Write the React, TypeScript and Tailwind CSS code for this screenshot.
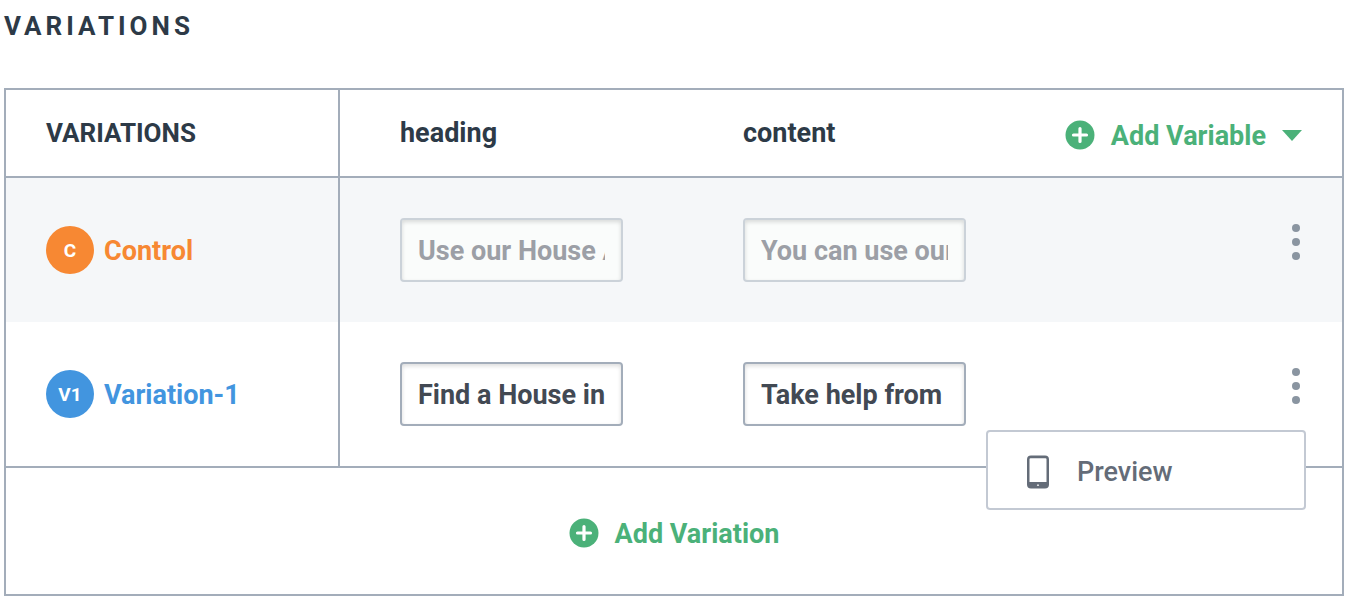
import { useState } from 'react';
import clsx from 'clsx';

const variations = [
  {
    id: 'control',
    badge: 'C',
    name: 'Control',
    heading: 'Use our House A',
    content: 'You can use our',
    disabled: true,
  },
  {
    id: 'v1',
    badge: 'V1',
    name: 'Variation-1',
    heading: 'Find a House in',
    content: 'Take help from',
    disabled: false,
  },
];

function PlusCircle() {
  return (
    <svg viewBox="0 0 30 30" className="size-[30px] shrink-0" aria-hidden="true">
      <circle cx="15" cy="15" r="14.5" fill="#4bb179" />
      <path d="M15 8.500v13M8.500 15h13" stroke="#fff" strokeWidth="3.200" strokeLinecap="round" />
    </svg>
  );
}

function PhoneIcon() {
  return (
    <svg viewBox="0 0 22 34" className="h-[34px] w-[22px] shrink-0" aria-hidden="true">
      <path
        fillRule="evenodd"
        fill="#646c78"
        d="M4 .5h14a4 4 0 0 1 4 4v25a4 4 0 0 1-4 4H4a4 4 0 0 1-4-4v-25a4 4 0 0 1 4-4ZM3.500 3.200a1 1 0 0 0-1 1V27h17V4.200a1 1 0 0 0-1-1Z"
      />
      <path d="M10.500 30.200h1" stroke="#fff" strokeWidth="1.200" strokeLinecap="round" />
    </svg>
  );
}

function VariableInput({ label, initial, disabled }: { label: string; initial: string; disabled: boolean }) {
  const [value, setValue] = useState(initial);

  return (
    <input
      type="text"
      aria-label={label}
      value={value}
      disabled={disabled}
      onChange={(e) => setValue(e.target.value)}
      className={clsx(
        'block h-16 w-full rounded-sm border-2 px-4 pt-0.5 font-bold shadow-[inset_0_2px_4px_rgba(0,0,0,0.14)] outline-none',
        disabled ? 'border-[#cbd2d9] bg-[#fafcfb] text-[#9c9fa6]' : 'border-[#a3adba] bg-white text-[#424953]',
      )}
    />
  );
}

function RowMenu({ name, open, onToggle }: { name: string; open: boolean; onToggle: () => void }) {
  return (
    <div className="relative flex justify-end">
      <button type="button" aria-label={`${name} options`} aria-expanded={open} onClick={onToggle} className="block px-0.5">
        <svg viewBox="0 0 8 36" className="h-9 w-2" fill="#8a95a1" aria-hidden="true">
          <circle cx="4" cy="4" r="4" />
          <circle cx="4" cy="18" r="4" />
          <circle cx="4" cy="32" r="4" />
        </svg>
      </button>
      {open && (
        <div className="absolute top-full -right-1 z-10 mt-[26px] w-80 rounded-sm border-2 border-[#c3c9d3] bg-white">
          <button type="button" className="flex h-[76px] w-full items-center gap-7 px-[39px] pt-1 font-medium text-[#646c78]">
            <PhoneIcon />
            Preview
          </button>
        </div>
      )}
    </div>
  );
}

export default function App() {
  const [openMenu, setOpenMenu] = useState<string | null>('v1');

  return (
    <main className="bg-white pl-1 pr-5 pb-4 pt-1.5 font-['Roboto','Liberation_Sans',sans-serif] text-[27px] leading-10 text-[#2d3a47]">
      <h1 className="text-[26px] font-bold tracking-[4px]">VARIATIONS</h1>

      <div className="mt-[42px] border-2 border-[#a3adba]">
        <table className="w-full table-fixed border-separate border-spacing-0">
          <thead>
            <tr className="h-[88px] text-left *:border-b-2 *:border-[#a3adba]">
              <th scope="col" className="w-1/4 border-r-2 pl-10 text-[26px] font-bold">VARIATIONS</th>
              <th scope="col" className="pl-[60px] font-bold">heading</th>
              <th scope="col" className="pl-[60px] font-bold">content</th>
              <td className="w-[316px] pr-10 pt-1">
                <button type="button" className="ml-auto flex items-center gap-4 whitespace-nowrap font-bold text-[#4bb179]">
                  <PlusCircle />
                  <span className="pt-0.5">Add Variable</span>
                  <svg viewBox="0 0 20 11" className="h-[11px] w-5 shrink-0" fill="#4bb179" aria-hidden="true">
                    <path d="M0 0h20L10 11Z" />
                  </svg>
                </button>
              </td>
            </tr>
          </thead>
          <tbody>
            {variations.map((v) => (
              <tr key={v.id} className={clsx('h-36', v.disabled && 'bg-[#f5f7f9]')}>
                <th scope="row" className="border-r-2 border-[#a3adba] pl-10 text-left font-bold">
                  <div className={clsx('flex items-center gap-2.5', v.disabled ? 'text-[#f78833]' : 'text-[#4295df]')}>
                    <span
                      className={clsx(
                        'flex size-12 shrink-0 items-center justify-center rounded-full pt-0.5 text-[19px] text-white',
                        v.disabled ? 'bg-[#f78833]' : 'bg-[#4295df]',
                      )}
                    >
                      {v.badge}
                    </span>
                    <span className="pt-0.5">{v.name}</span>
                  </div>
                </th>
                <td className="px-[60px]">
                  <VariableInput label={`${v.name} heading`} initial={v.heading} disabled={v.disabled} />
                </td>
                <td className="px-[60px]">
                  <VariableInput label={`${v.name} content`} initial={v.content} disabled={v.disabled} />
                </td>
                <td className="pr-10 pb-4">
                  <RowMenu
                    name={v.name}
                    open={openMenu === v.id}
                    onToggle={() => setOpenMenu(openMenu === v.id ? null : v.id)}
                  />
                </td>
              </tr>
            ))}
          </tbody>
        </table>
        <div className="flex h-32 items-center justify-center border-t-2 border-[#a3adba] pt-1">
          <button type="button" className="flex items-center gap-4 font-bold text-[#4bb179]">
            <PlusCircle />
            <span className="pt-0.5">Add Variation</span>
          </button>
        </div>
      </div>
    </main>
  );
}
